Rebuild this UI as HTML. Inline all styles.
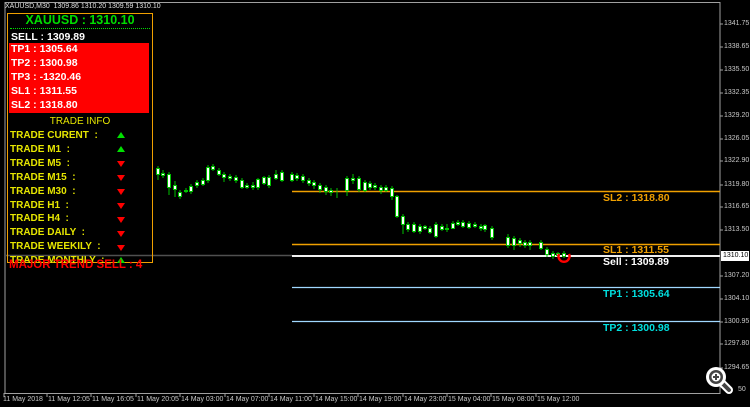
<!DOCTYPE html>
<html><head><meta charset="utf-8"><style>
body{margin:0;background:#000;width:750px;height:407px;overflow:hidden;position:relative;font-family:"Liberation Sans",Arial,sans-serif}
.t{position:absolute;white-space:nowrap;line-height:1}
.ax{position:absolute;font-size:7px;color:#c8c8c8;white-space:nowrap;line-height:1;font-family:"Liberation Sans",sans-serif}
.b{font-weight:bold}
.y{color:#e6e600;font-size:10px;font-weight:bold;left:10px}
.w{color:#fff;font-size:10.5px;font-weight:bold;left:11px}
.tri{position:absolute;left:117px;width:0;height:0;border-left:4px solid transparent;border-right:4px solid transparent}
.up{border-bottom:6px solid #00e000}
.dn{border-top:6px solid #ff0000}
</style></head><body>
<svg width="750" height="407" style="position:absolute;left:0;top:0">
<rect x="5" y="2.5" width="715" height="391" fill="none" stroke="#a0a0a0" stroke-width="1"/>
<g stroke="#a0a0a0"><line x1="720" y1="24" x2="723" y2="24"/><line x1="720" y1="47" x2="723" y2="47"/><line x1="720" y1="70" x2="723" y2="70"/><line x1="720" y1="93" x2="723" y2="93"/><line x1="720" y1="116" x2="723" y2="116"/><line x1="720" y1="139" x2="723" y2="139"/><line x1="720" y1="161" x2="723" y2="161"/><line x1="720" y1="185" x2="723" y2="185"/><line x1="720" y1="207" x2="723" y2="207"/><line x1="720" y1="230" x2="723" y2="230"/><line x1="720" y1="276" x2="723" y2="276"/><line x1="720" y1="299" x2="723" y2="299"/><line x1="720" y1="322" x2="723" y2="322"/><line x1="720" y1="344" x2="723" y2="344"/><line x1="720" y1="368" x2="723" y2="368"/></g>
<g stroke="#a0a0a0"><line x1="4" y1="393" x2="4" y2="397"/><line x1="47" y1="393" x2="47" y2="397"/><line x1="91" y1="393" x2="91" y2="397"/><line x1="136" y1="393" x2="136" y2="397"/><line x1="180" y1="393" x2="180" y2="397"/><line x1="225" y1="393" x2="225" y2="397"/><line x1="269" y1="393" x2="269" y2="397"/><line x1="314" y1="393" x2="314" y2="397"/><line x1="358" y1="393" x2="358" y2="397"/><line x1="403" y1="393" x2="403" y2="397"/><line x1="447" y1="393" x2="447" y2="397"/><line x1="491" y1="393" x2="491" y2="397"/><line x1="536" y1="393" x2="536" y2="397"/></g>
<line x1="5" y1="255.5" x2="292" y2="255.5" stroke="#505050" stroke-width="1.5"/>
<line x1="292" y1="191.5" x2="720" y2="191.5" stroke="#f0a000" stroke-width="1.5"/>
<line x1="292" y1="244.5" x2="720" y2="244.5" stroke="#f0a000" stroke-width="1.5"/>
<line x1="292" y1="256" x2="720" y2="256" stroke="#f0f0f0" stroke-width="2"/>
<line x1="292" y1="287.5" x2="720" y2="287.5" stroke="#a0d8ff" stroke-width="1.2"/>
<line x1="292" y1="321.5" x2="720" y2="321.5" stroke="#a0d8ff" stroke-width="1.2"/>
<g stroke="#00c000" stroke-width="1" fill="#fff">
<path d="M158 166V180M163 170V178M169 172V195M175 181V197M180 190V199M186 188V193M191 184V194M197 180V188M203 178V186M208 165V183M213 164V171M219 168V176M224 172V182M230 174V181M236 175V183M242 178V189M247 183V189M253 182V190M258 178V190M264 176V185M269 175V188M276 170V180M282 170V182M292 172V182M297 173V181M303 174V183M309 178V186M314 180V189M320 183V193M326 185V195M331 188V196M337 188V198M347 176V196M353 174V184M359 176V192M365 180V192M370 181V190M375 183V190M381 185V194M386 185V192M392 186V200M397 195V218M403 214V234M408 222V232M414 222V233M420 224V234M425 225V230M430 226V234M436 222V238M442 224V231M447 224V232M453 221V229M458 220V226M463 220V228M469 221V229M475 222V228M481 224V231M485 224V232M492 226V240M508 234V248M514 236V250M520 238V247M525 240V248M530 240V250M541 240V250M547 247V257M553 251V259M558 252V258M564 251V258" fill="none"/>
<rect x="156.5" y="168.5" width="3" height="6"/><rect x="161.5" y="173.5" width="3" height="2"/><rect x="167.5" y="174.5" width="3" height="13"/><rect x="173.5" y="185.5" width="3" height="4"/><rect x="178.5" y="192.5" width="3" height="4"/><rect x="184.5" y="190.5" width="3" height="1"/><rect x="189.5" y="186.5" width="3" height="5"/><rect x="195.5" y="182.5" width="3" height="3"/><rect x="201.5" y="180.5" width="3" height="4"/><rect x="206.5" y="167.5" width="3" height="13"/><rect x="211.5" y="166.5" width="3" height="3"/><rect x="217.5" y="170.5" width="3" height="4"/><rect x="222.5" y="174.5" width="3" height="3"/><rect x="228.5" y="176.5" width="3" height="2"/><rect x="234.5" y="177.5" width="3" height="3"/><rect x="240.5" y="180.5" width="3" height="7"/><rect x="245.5" y="185.5" width="3" height="2"/><rect x="251.5" y="185.5" width="3" height="2"/><rect x="256.5" y="179.5" width="3" height="8"/><rect x="262.5" y="177.5" width="3" height="6"/><rect x="267.5" y="177.5" width="3" height="8"/><rect x="274.5" y="174.5" width="3" height="4"/><rect x="280.5" y="172.5" width="3" height="8"/><rect x="290.5" y="174.5" width="3" height="6"/><rect x="295.5" y="175.5" width="3" height="3"/><rect x="301.5" y="176.5" width="3" height="4"/><rect x="307.5" y="180.5" width="3" height="3"/><rect x="312.5" y="182.5" width="3" height="3"/><rect x="318.5" y="185.5" width="3" height="4"/><rect x="324.5" y="187.5" width="3" height="4"/><rect x="329.5" y="190.5" width="3" height="2"/><rect x="345.5" y="178.5" width="3" height="12"/><rect x="351.5" y="178.5" width="3" height="2"/><rect x="357.5" y="178.5" width="3" height="11"/><rect x="363.5" y="182.5" width="3" height="8"/><rect x="368.5" y="183.5" width="3" height="4"/><rect x="373.5" y="185.5" width="3" height="2"/><rect x="379.5" y="187.5" width="3" height="3"/><rect x="384.5" y="187.5" width="3" height="3"/><rect x="390.5" y="188.5" width="3" height="8"/><rect x="395.5" y="196.5" width="3" height="20"/><rect x="401.5" y="216.5" width="3" height="8"/><rect x="406.5" y="224.5" width="3" height="5"/><rect x="412.5" y="224.5" width="3" height="7"/><rect x="418.5" y="226.5" width="3" height="5"/><rect x="423.5" y="226.5" width="3" height="2"/><rect x="428.5" y="228.5" width="3" height="4"/><rect x="434.5" y="224.5" width="3" height="12"/><rect x="440.5" y="226.5" width="3" height="3"/><rect x="445.5" y="228.5" width="3" height="1"/><rect x="451.5" y="223.5" width="3" height="5"/><rect x="456.5" y="222.5" width="3" height="2"/><rect x="461.5" y="222.5" width="3" height="4"/><rect x="467.5" y="223.5" width="3" height="4"/><rect x="473.5" y="224.5" width="3" height="2"/><rect x="479.5" y="226.5" width="3" height="2"/><rect x="483.5" y="225.5" width="3" height="4"/><rect x="490.5" y="228.5" width="3" height="9"/><rect x="506.5" y="237.5" width="3" height="8"/><rect x="512.5" y="238.5" width="3" height="7"/><rect x="518.5" y="240.5" width="3" height="3"/><rect x="523.5" y="242.5" width="3" height="3"/><rect x="528.5" y="242.5" width="3" height="3"/><rect x="539.5" y="242.5" width="3" height="6"/><rect x="545.5" y="249.5" width="3" height="5"/><rect x="551.5" y="253.5" width="3" height="3"/><rect x="556.5" y="253.5" width="3" height="2"/><rect x="562.5" y="253.5" width="3" height="3"/>
</g>
<path d="M559 254 A5.5 5.5 0 1 0 569 254" fill="none" stroke="#ff0000" stroke-width="2.5"/>
<rect x="721" y="251" width="28" height="10" fill="#fff"/>
<g transform="translate(716,377)">
<line x1="5" y1="5" x2="13" y2="13" stroke="#fff" stroke-width="8" stroke-linecap="round"/>
<line x1="5" y1="5" x2="13" y2="13" stroke="#444" stroke-width="4" stroke-linecap="round"/>
<circle cx="0" cy="0" r="10" fill="#fff"/><circle cx="0" cy="0" r="7" fill="#444"/><circle cx="0" cy="0" r="4.5" fill="#fff"/>
<path d="M-3 0H3M0 -3V3" stroke="#444" stroke-width="2"/>
</g>
</svg>
<div class="t" style="left:5px;top:3px;font-size:7px;color:#e0e0e0">XAUUSD,M30 &nbsp;1309.86 1310.20 1309.59 1310.10</div>
<div style="position:absolute;left:7px;top:13px;width:144px;height:248px;border:1.5px solid #f0a000"></div>
<div class="t b" style="left:0;width:160px;text-align:center;top:14px;font-size:12.5px;color:#00dd00">XAUUSD : 1310.10</div>
<div style="position:absolute;left:10px;top:28px;width:140px;border-top:1px dotted #00dd00"></div>
<div class="t w" style="top:32px">SELL : 1309.89</div>
<div style="position:absolute;left:9px;top:43px;width:140px;height:70px;background:#ff0000"></div>
<div class="t w" style="top:44px">TP1 : 1305.64</div>
<div class="t w" style="top:58px">TP2 : 1300.98</div>
<div class="t w" style="top:72px">TP3 : -1320.46</div>
<div class="t w" style="top:86px">SL1 : 1311.55</div>
<div class="t w" style="top:100px">SL2 : 1318.80</div>
<div class="t" style="left:0;width:160px;text-align:center;top:117px;font-size:10px;color:#e6e600">TRADE INFO</div>
<div class="t y" style="top:131px">TRADE CURENT &nbsp;:</div><div class="tri up" style="top:132px"></div>
<div class="t y" style="top:145px">TRADE M1 &nbsp;:</div><div class="tri up" style="top:146px"></div>
<div class="t y" style="top:159px">TRADE M5 &nbsp;:</div><div class="tri dn" style="top:161px"></div>
<div class="t y" style="top:173px">TRADE M15 &nbsp;:</div><div class="tri dn" style="top:175px"></div>
<div class="t y" style="top:187px">TRADE M30 &nbsp;:</div><div class="tri dn" style="top:189px"></div>
<div class="t y" style="top:201px">TRADE H1 &nbsp;:</div><div class="tri dn" style="top:203px"></div>
<div class="t y" style="top:214px">TRADE H4 &nbsp;:</div><div class="tri dn" style="top:217px"></div>
<div class="t y" style="top:228px">TRADE DAILY &nbsp;:</div><div class="tri dn" style="top:231px"></div>
<div class="t y" style="top:242px">TRADE WEEKILY &nbsp;:</div><div class="tri dn" style="top:245px"></div>
<div class="t y" style="top:256px">TRADE MONTHLY &nbsp;:</div><div class="tri up" style="top:257px"></div>
<div class="t b" style="left:9px;top:260px;font-size:11.5px;color:#ff0000">MAJOR TREND SELL : 4</div>
<div class="t b" style="left:603px;top:193px;font-size:10.5px;color:#f0a000">SL2 : 1318.80</div>
<div class="t b" style="left:603px;top:245px;font-size:10.5px;color:#f0a000">SL1 : 1311.55</div>
<div class="t b" style="left:603px;top:257px;font-size:10.5px;color:#fff">Sell : 1309.89</div>
<div class="t b" style="left:603px;top:289px;font-size:10.5px;color:#00e0e0">TP1 : 1305.64</div>
<div class="t b" style="left:603px;top:323px;font-size:10.5px;color:#00e0e0">TP2 : 1300.98</div>
<div class="ax" style="left:724px;top:20px">1341.75</div>
<div class="ax" style="left:724px;top:43px">1338.65</div>
<div class="ax" style="left:724px;top:66px">1335.50</div>
<div class="ax" style="left:724px;top:89px">1332.35</div>
<div class="ax" style="left:724px;top:112px">1329.20</div>
<div class="ax" style="left:724px;top:135px">1326.05</div>
<div class="ax" style="left:724px;top:157px">1322.90</div>
<div class="ax" style="left:724px;top:181px">1319.80</div>
<div class="ax" style="left:724px;top:203px">1316.65</div>
<div class="ax" style="left:724px;top:226px">1313.50</div>
<div class="ax" style="left:723px;top:252px;color:#000">1310.10</div>
<div class="ax" style="left:724px;top:272px">1307.20</div>
<div class="ax" style="left:724px;top:295px">1304.10</div>
<div class="ax" style="left:724px;top:318px">1300.95</div>
<div class="ax" style="left:724px;top:340px">1297.80</div>
<div class="ax" style="left:724px;top:364px">1294.65</div>
<div class="ax" style="left:738px;top:386px">50</div>
<div class="ax" style="left:3px;top:396px">11 May 2018</div>
<div class="ax" style="left:48px;top:396px">11 May 12:05</div>
<div class="ax" style="left:92px;top:396px">11 May 16:05</div>
<div class="ax" style="left:137px;top:396px">11 May 20:05</div>
<div class="ax" style="left:181px;top:396px">14 May 03:00</div>
<div class="ax" style="left:226px;top:396px">14 May 07:00</div>
<div class="ax" style="left:270px;top:396px">14 May 11:00</div>
<div class="ax" style="left:315px;top:396px">14 May 15:00</div>
<div class="ax" style="left:359px;top:396px">14 May 19:00</div>
<div class="ax" style="left:404px;top:396px">14 May 23:00</div>
<div class="ax" style="left:448px;top:396px">15 May 04:00</div>
<div class="ax" style="left:492px;top:396px">15 May 08:00</div>
<div class="ax" style="left:537px;top:396px">15 May 12:00</div>
</body></html>
